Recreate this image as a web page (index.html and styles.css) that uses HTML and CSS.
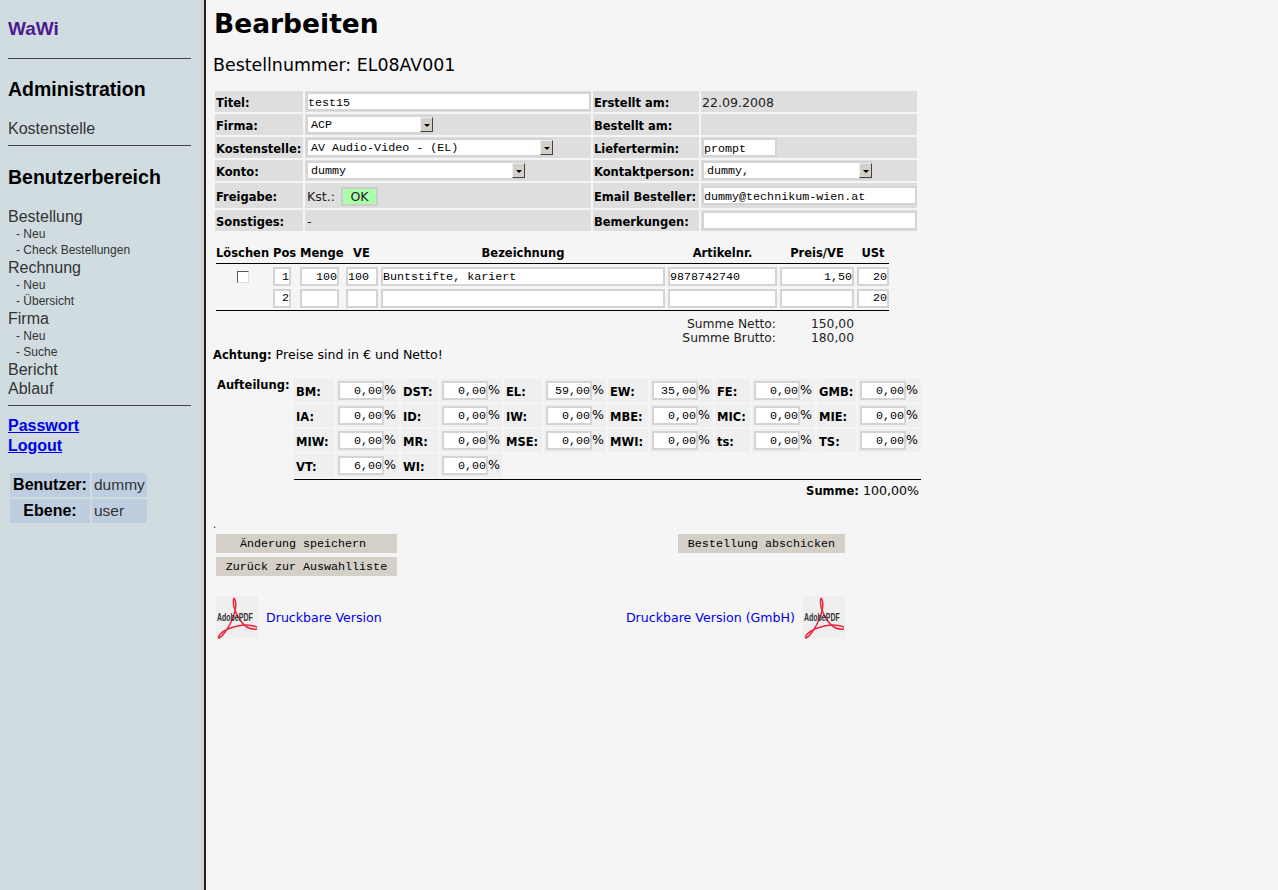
FILE: index.html
```html
<!DOCTYPE html>
<html lang="de">
<head>
  <meta charset="UTF-8">
  <title>WaWi - Bearbeiten</title>
  <link rel="stylesheet" href="styles.css">
</head>
<body>

<div class="menu">
  <div class="logo">WaWi</div>
  <hr class="rule-first">
  <h2 class="menu-head head-admin">Administration</h2>
  <div class="menu-item item-kst">Kostenstelle</div>
  <hr class="rule-kst">
  <h2 class="menu-head head-user">Benutzerbereich</h2>
  <div class="menu-list">
    <div class="menu-item">Bestellung</div>
    <div class="menu-sub">- Neu</div>
    <div class="menu-sub">- Check Bestellungen</div>
    <div class="menu-item">Rechnung</div>
    <div class="menu-sub">- Neu</div>
    <div class="menu-sub">- Übersicht</div>
    <div class="menu-item">Firma</div>
    <div class="menu-sub">- Neu</div>
    <div class="menu-sub">- Suche</div>
    <div class="menu-item">Bericht</div>
    <div class="menu-item">Ablauf</div>
  </div>
  <hr class="rule-list">
  <a class="menu-link" href="#">Passwort</a>
  <a class="menu-link" href="#">Logout</a>
  <table class="user-table">
    <tr><th>Benutzer:</th><td>dummy</td></tr>
    <tr><th>Ebene:</th><td>user</td></tr>
  </table>
</div>

<div class="divider"></div>

<div class="content">
  <h1>Bearbeiten</h1>
  <h3 class="order-no">Bestellnummer: EL08AV001</h3>

  <table class="head-table">
    <colgroup><col class="c-l1"><col class="c-v1"><col class="c-l2"><col class="c-v2"></colgroup>
    <tr>
      <th>Titel:</th>
      <td><input class="txt w-title" type="text" value="test15"></td>
      <th>Erstellt am:</th>
      <td class="plain date">22.09.2008</td>
    </tr>
    <tr>
      <th>Firma:</th>
      <td><div class="sel w-firma"><span class="sel-val">ACP</span><span class="sel-btn"></span></div></td>
      <th>Bestellt am:</th>
      <td></td>
    </tr>
    <tr>
      <th>Kostenstelle:</th>
      <td><div class="sel w-kst"><span class="sel-val">AV Audio-Video - (EL)</span><span class="sel-btn"></span></div></td>
      <th>Liefertermin:</th>
      <td><input class="txt w-liefer" type="text" value="prompt"></td>
    </tr>
    <tr>
      <th>Konto:</th>
      <td><div class="sel w-konto"><span class="sel-val">dummy</span><span class="sel-btn"></span></div></td>
      <th>Kontaktperson:</th>
      <td><div class="sel w-kontakt"><span class="sel-val">dummy,</span><span class="sel-btn"></span></div></td>
    </tr>
    <tr class="row-tall">
      <th>Freigabe:</th>
      <td class="plain"><span class="kst">Kst.:</span><span class="ok">OK</span></td>
      <th>Email Besteller:</th>
      <td><input class="txt w-mail" type="text" value="dummy@technikum-wien.at"></td>
    </tr>
    <tr>
      <th>Sonstiges:</th>
      <td class="plain">-</td>
      <th>Bemerkungen:</th>
      <td><input class="txt w-mail" type="text" value=""></td>
    </tr>
  </table>

  <table class="pos-table">
    <colgroup>
      <col class="p-del"><col class="p-pos"><col class="p-menge"><col class="p-ve">
      <col class="p-bez"><col class="p-art"><col class="p-preis"><col class="p-ust">
    </colgroup>
    <tr class="pos-head">
      <th class="left">Löschen</th>
      <th class="left">Pos</th>
      <th class="left">Menge</th>
      <th class="ve">VE</th>
      <th>Bezeichnung</th>
      <th>Artikelnr.</th>
      <th>Preis/VE</th>
      <th class="ust">USt</th>
    </tr>
    <tr class="pos-row first">
      <td class="del"><input class="check" type="checkbox"></td>
      <td><input class="txt right w-pos" type="text" value="1"></td>
      <td><input class="txt right w-menge" type="text" value="100"></td>
      <td><input class="txt w-ve" type="text" value="100"></td>
      <td><input class="txt w-bez" type="text" value="Buntstifte, kariert"></td>
      <td><input class="txt w-art" type="text" value="9878742740"></td>
      <td><input class="txt right w-preis" type="text" value="1,50"></td>
      <td><input class="txt right w-ust" type="text" value="20"></td>
    </tr>
    <tr class="pos-row last">
      <td></td>
      <td><input class="txt right w-pos" type="text" value="2"></td>
      <td><input class="txt right w-menge" type="text" value=""></td>
      <td><input class="txt w-ve" type="text" value=""></td>
      <td><input class="txt w-bez" type="text" value=""></td>
      <td><input class="txt w-art" type="text" value=""></td>
      <td><input class="txt right w-preis" type="text" value=""></td>
      <td><input class="txt right w-ust" type="text" value="20"></td>
    </tr>
    <tr class="sum-row sum-top">
      <td colspan="6">Summe Netto:</td>
      <td>150,00</td>
      <td></td>
    </tr>
    <tr class="sum-row">
      <td colspan="6">Summe Brutto:</td>
      <td>180,00</td>
      <td></td>
    </tr>
  </table>

  <p class="note"><b>Achtung:</b> Preise sind in € und Netto!</p>

  <div class="split">
    <div class="split-label">Aufteilung:</div>
    <table class="split-table">
      <colgroup>
        <col class="s1"><col class="s2"><col class="s3"><col class="s4"><col class="s5"><col class="s6">
        <col class="s7"><col class="s8"><col class="s9"><col class="s10"><col class="s11"><col class="s12">
      </colgroup>
      <tr>
        <th>BM:</th><td><input class="txt right pct" type="text" value="0,00">%</td>
        <th>DST:</th><td><input class="txt right pct" type="text" value="0,00">%</td>
        <th>EL:</th><td><input class="txt right pct" type="text" value="59,00">%</td>
        <th>EW:</th><td><input class="txt right pct" type="text" value="35,00">%</td>
        <th>FE:</th><td><input class="txt right pct" type="text" value="0,00">%</td>
        <th>GMB:</th><td><input class="txt right pct" type="text" value="0,00">%</td>
      </tr>
      <tr>
        <th>IA:</th><td><input class="txt right pct" type="text" value="0,00">%</td>
        <th>ID:</th><td><input class="txt right pct" type="text" value="0,00">%</td>
        <th>IW:</th><td><input class="txt right pct" type="text" value="0,00">%</td>
        <th>MBE:</th><td><input class="txt right pct" type="text" value="0,00">%</td>
        <th>MIC:</th><td><input class="txt right pct" type="text" value="0,00">%</td>
        <th>MIE:</th><td><input class="txt right pct" type="text" value="0,00">%</td>
      </tr>
      <tr>
        <th>MIW:</th><td><input class="txt right pct" type="text" value="0,00">%</td>
        <th>MR:</th><td><input class="txt right pct" type="text" value="0,00">%</td>
        <th>MSE:</th><td><input class="txt right pct" type="text" value="0,00">%</td>
        <th>MWI:</th><td><input class="txt right pct" type="text" value="0,00">%</td>
        <th>ts:</th><td><input class="txt right pct" type="text" value="0,00">%</td>
        <th>TS:</th><td><input class="txt right pct" type="text" value="0,00">%</td>
      </tr>
      <tr>
        <th>VT:</th><td><input class="txt right pct" type="text" value="6,00">%</td>
        <th>WI:</th><td><input class="txt right pct" type="text" value="0,00">%</td>
        <td class="empty" colspan="8"></td>
      </tr>
      <tr>
        <td class="split-sum" colspan="12"><b>Summe:</b> 100,00%</td>
      </tr>
    </table>
  </div>

  <div class="dot">.</div>

  <div class="actions">
    <div class="action-col">
      <button class="btn w-save btn-shift" type="button">Änderung speichern</button>
      <button class="btn w-save" type="button">Zurück zur Auswahlliste</button>
    </div>
    <button class="btn w-send" type="button">Bestellung abschicken</button>
  </div>

  <div class="pdf-row">
    <a class="pdf-link" href="#">
      <svg class="pdf-icon" viewBox="0 0 42 43" width="42" height="43">
        <rect width="42" height="43" fill="#efefef"/>
        <path d="M18 2C16 8 19 16 24 24C28 30 34 34 41 33" fill="none" stroke="#e8283c" stroke-width="1.5"/>
        <path d="M18 2C21 6 20 14 16 24C12 33 6 41 3 42C1 41 5 36 12 33C22 29 33 28 41 31" fill="none" stroke="#e8283c" stroke-width="1.5"/>
        <text transform="translate(1 25) scale(.7 1)" class="pdf-word">AdobePDF</text>
      </svg>
      <span>Druckbare Version</span>
    </a>
    <a class="pdf-link" href="#">
      <span>Druckbare Version (GmbH)</span>
      <svg class="pdf-icon" viewBox="0 0 42 43" width="42" height="43">
        <rect width="42" height="43" fill="#efefef"/>
        <path d="M18 2C16 8 19 16 24 24C28 30 34 34 41 33" fill="none" stroke="#e8283c" stroke-width="1.5"/>
        <path d="M18 2C21 6 20 14 16 24C12 33 6 41 3 42C1 41 5 36 12 33C22 29 33 28 41 31" fill="none" stroke="#e8283c" stroke-width="1.5"/>
        <text transform="translate(1 25) scale(.7 1)" class="pdf-word">AdobePDF</text>
      </svg>
    </a>
  </div>
</div>

</body>
</html>
```

FILE: styles.css
```css
html, body {
  height: 100%;
  margin: 0;
  overflow: hidden;
}
body {
  display: flex;
  background: #f5f5f5;
  font-family: "DejaVu Sans", sans-serif;
  font-size: 12.6px;
  color: #000;
}

/* left frame */
.menu {
  width: 193px;
  padding-left: 8px;
  background: #d1dce1;
  font-family: "Liberation Sans", Arial, sans-serif;
  flex: none;
}
.divider {
  width: 5px;
  flex: none;
  background: #d4d0c8;
  border-right: 2px solid #222;
  box-sizing: border-box;
}
.logo {
  margin-top: 17px;
  height: 23px;
  line-height: 23px;
  font-size: 19px;
  font-weight: bold;
  color: #4b1a8f;
}
.menu hr {
  width: 183px;
  height: 1px;
  margin: 0;
  border: none;
  background: #444;
}
.rule-first { margin-top: 18px !important; }
.menu-head {
  margin: 0;
  height: 24px;
  line-height: 24px;
  font-size: 19.5px;
  font-weight: bold;
}
.head-admin { margin-top: 18px; }
.item-kst { margin-top: 18px; }
.rule-kst { margin-top: 7px !important; }
.head-user { margin-top: 19px; }
.menu-list { margin-top: 18px; }
.menu-item {
  height: 19px;
  line-height: 19px;
  font-size: 16px;
  color: #333;
}
.menu-sub {
  height: 16px;
  line-height: 16px;
  padding-left: 8px;
  font-size: 12px;
  color: #333;
}
.rule-list { margin-top: 7px !important; }
.menu-link {
  display: block;
  height: 20px;
  line-height: 20px;
  font-size: 16px;
  font-weight: bold;
  color: #00e;
}
.rule-list + .menu-link { margin-top: 10px; }
.user-table {
  margin: 15px 0 0 0;
  border-spacing: 2px;
  font-size: 16px;
}
.user-table th,
.user-table td {
  height: 24px;
  padding: 0 2px;
  background: #bfcde0;
}
.user-table th { width: 76px; text-align: center; }
.user-table td { width: 49px; color: #333; font-weight: normal; font-size: 15.5px; }

/* right frame */
.content {
  flex: 1;
  padding-left: 7px;
  min-width: 0;
}
h1 {
  margin: 6px 0 0 1px;
  height: 36px;
  line-height: 36px;
  font-size: 26.5px;
  font-weight: bold;
}
.order-no {
  margin: 12px 0 0 0;
  height: 22px;
  line-height: 22px;
  font-size: 17.4px;
  font-weight: normal;
}

/* form fields */
.txt {
  box-sizing: border-box;
  height: 19px;
  margin: 0;
  padding: 0;
  border: 2px solid #d4d4d4;
  border-radius: 0;
  background: #fff;
  font-family: "Liberation Mono", "Courier New", monospace;
  font-size: 11.7px;
  color: #000;
  vertical-align: middle;
  outline: none;
}
.head-table .txt { padding-top: 2px; }
.right { text-align: right; }
.sel {
  box-sizing: border-box;
  display: flex;
  height: 19px;
  border: 2px solid #d4d4d4;
  border-right: none;
  background: #fff;
  font-family: "Liberation Mono", "Courier New", monospace;
  font-size: 11.7px;
  line-height: 16px;
}
.sel-val {
  flex: 1;
  padding-left: 3px;
  white-space: nowrap;
}
.sel-btn {
  position: relative;
  box-sizing: border-box;
  width: 13px;
  flex: none;
  background: #d4d0c8;
  border: 1px solid;
  border-color: #eee #444 #444 #eee;
}
.sel-btn::after {
  content: "";
  position: absolute;
  left: 3px;
  top: 6px;
  border: 3px solid transparent;
  border-top: 3px solid #000;
  border-bottom: none;
}
.w-title { width: 285px; }
.w-firma { width: 127px; }
.w-kst { width: 247px; }
.w-konto { width: 219px; }
.w-kontakt { width: 170px; }
.w-liefer { width: 75px; }
.w-mail { width: 215px; }

/* order head */
.head-table {
  margin: 13px 0 0 0;
  border-spacing: 2px;
  table-layout: fixed;
  width: 706px;
}
.c-l1 { width: 88px; }
.c-v1 { width: 286px; }
.c-l2 { width: 106px; }
.c-v2 { width: 216px; }
.head-table th,
.head-table td {
  box-sizing: border-box;
  height: 21px;
  padding: 0 0 0 1px;
  background: #dedede;
  text-align: left;
  font-size: 11.5px;
  white-space: nowrap;
}
.head-table th { padding-top: 2px; }
.head-table .plain { font-size: 12.6px; padding: 2px 0 0 2px; color: #222; }
.head-table .date { padding-left: 1px; }
.head-table .row-tall th,
.head-table .row-tall td { height: 25px; }
.kst { margin-right: 6px; }
.ok {
  display: inline-block;
  box-sizing: border-box;
  width: 37px;
  height: 19px;
  line-height: 15px;
  background: #aaffaa;
  border: 2px solid #ccc;
  text-align: center;
}

/* positions */
.pos-table {
  margin: 10px 0 0 3px;
  width: 673px;
  table-layout: fixed;
  border-collapse: collapse;
}
.p-del { width: 57px; }
.p-pos { width: 27px; }
.p-menge { width: 46px; }
.p-ve { width: 35px; }
.p-bez { width: 287px; }
.p-art { width: 112px; }
.p-preis { width: 77px; }
.p-ust { width: 32px; }
.pos-table td,
.pos-table th { padding: 0; white-space: nowrap; }
.pos-head th {
  height: 20px;
  padding-right: 3px;
  border-bottom: 1px solid #000;
  font-size: 11.5px;
  text-align: center;
}
.pos-head th.left { padding-right: 0; text-align: left; }
.pos-head th.ve { padding-right: 4px; }
.pos-head th.ust { padding-right: 0; }
.pos-row td {
  box-sizing: border-box;
  vertical-align: top;
}
.pos-row.first td { height: 25px; padding-top: 3px; }
.pos-row.last td { height: 22px; border-bottom: 1px solid #000; }
.txt.w-pos, .txt.w-menge, .txt.w-ve, .txt.w-bez,
.txt.w-art, .txt.w-preis, .txt.w-ust { display: block; }
.check {
  appearance: none;
  display: block;
  box-sizing: border-box;
  width: 12px;
  height: 12px;
  margin: 4px 0 0 21px;
  background: #fff;
  border: 1px solid;
  border-color: #555 #ddd #ddd #555;
}
.w-pos { width: 18px; }
.w-menge { width: 39px; }
.w-ve { width: 32px; }
.w-bez { width: 284px; }
.w-art { width: 109px; }
.w-preis { width: 74px; }
.w-ust { width: 32px; }
.sum-row td {
  box-sizing: border-box;
  height: 14px;
  line-height: 14px;
  font-size: 12.3px;
  text-align: right;
  color: #222;
}
.pos-table .sum-row td:first-child { padding-right: 4px; }
.pos-table .sum-row td:nth-child(2) { padding-right: 3px; }
.pos-table .sum-top td { height: 20px; padding-top: 6px; }

.note {
  margin: 2px 0 0 0;
  height: 16px;
  line-height: 16px;
  font-size: 12.6px;
}
.note b { font-size: 11.5px; }

/* cost split */
.split {
  display: flex;
  align-items: flex-start;
  margin-top: 15px;
}
.split-label {
  width: 79px;
  flex: none;
  padding-left: 4px;
  box-sizing: border-box;
  font-size: 11.5px;
  font-weight: bold;
  line-height: 14px;
}
.split-table {
  margin: -1px 0 0 0;
  width: 631px;
  border-spacing: 2px;
  table-layout: fixed;
}
.s1 { width: 40px; }
.s2 { width: 63px; }
.s3 { width: 37px; }
.s4 { width: 62px; }
.s5 { width: 38px; }
.s6 { width: 62px; }
.s7 { width: 40px; }
.s8 { width: 63px; }
.s9 { width: 35px; }
.s10 { width: 63px; }
.s11 { width: 39px; }
.s12 { width: 63px; }
.split-table th,
.split-table td {
  box-sizing: border-box;
  height: 23px;
  padding: 0;
  background: #efefef;
  font-size: 12.6px;
  white-space: nowrap;
}
.split-table th {
  padding: 2px 0 0 2px;
  text-align: left;
  font-size: 11.5px;
}
.split-table td { padding-left: 2px; }
.split-table .empty { background: none; }
.pct { width: 46px; }
.split-table .split-sum {
  height: 20px;
  padding: 2px 2px 0 0;
  background: none;
  border-top: 1px solid #000;
  text-align: right;
}
.split-sum b { font-size: 11.5px; }

/* buttons and links */
.dot {
  margin: 18px 0 0 0;
  height: 12px;
  line-height: 12px;
  font-size: 10px;
}
.actions {
  display: flex;
  justify-content: space-between;
  align-items: flex-start;
  width: 629px;
  margin: 3px 0 0 3px;
}
.action-col {
  display: flex;
  flex-direction: column;
  gap: 4px;
}
.btn {
  height: 19px;
  padding: 0;
  border: none;
  background: #d4d0c8;
  font-family: "Liberation Mono", "Courier New", monospace;
  font-size: 11.7px;
  color: #000;
}
.btn-shift { padding-right: 7px; }
.w-save { width: 181px; }
.w-send { width: 167px; }
.pdf-row {
  display: flex;
  justify-content: space-between;
  width: 629px;
  margin: 20px 0 0 3px;
}
.pdf-link {
  display: flex;
  align-items: center;
  gap: 8px;
  color: #00e;
  text-decoration: none;
  font-size: 12.6px;
}
.pdf-icon { display: block; }
.pdf-word {
  font-family: "Liberation Sans", Arial, sans-serif;
  font-size: 10px;
  font-weight: bold;
  fill: #333;
}
```
